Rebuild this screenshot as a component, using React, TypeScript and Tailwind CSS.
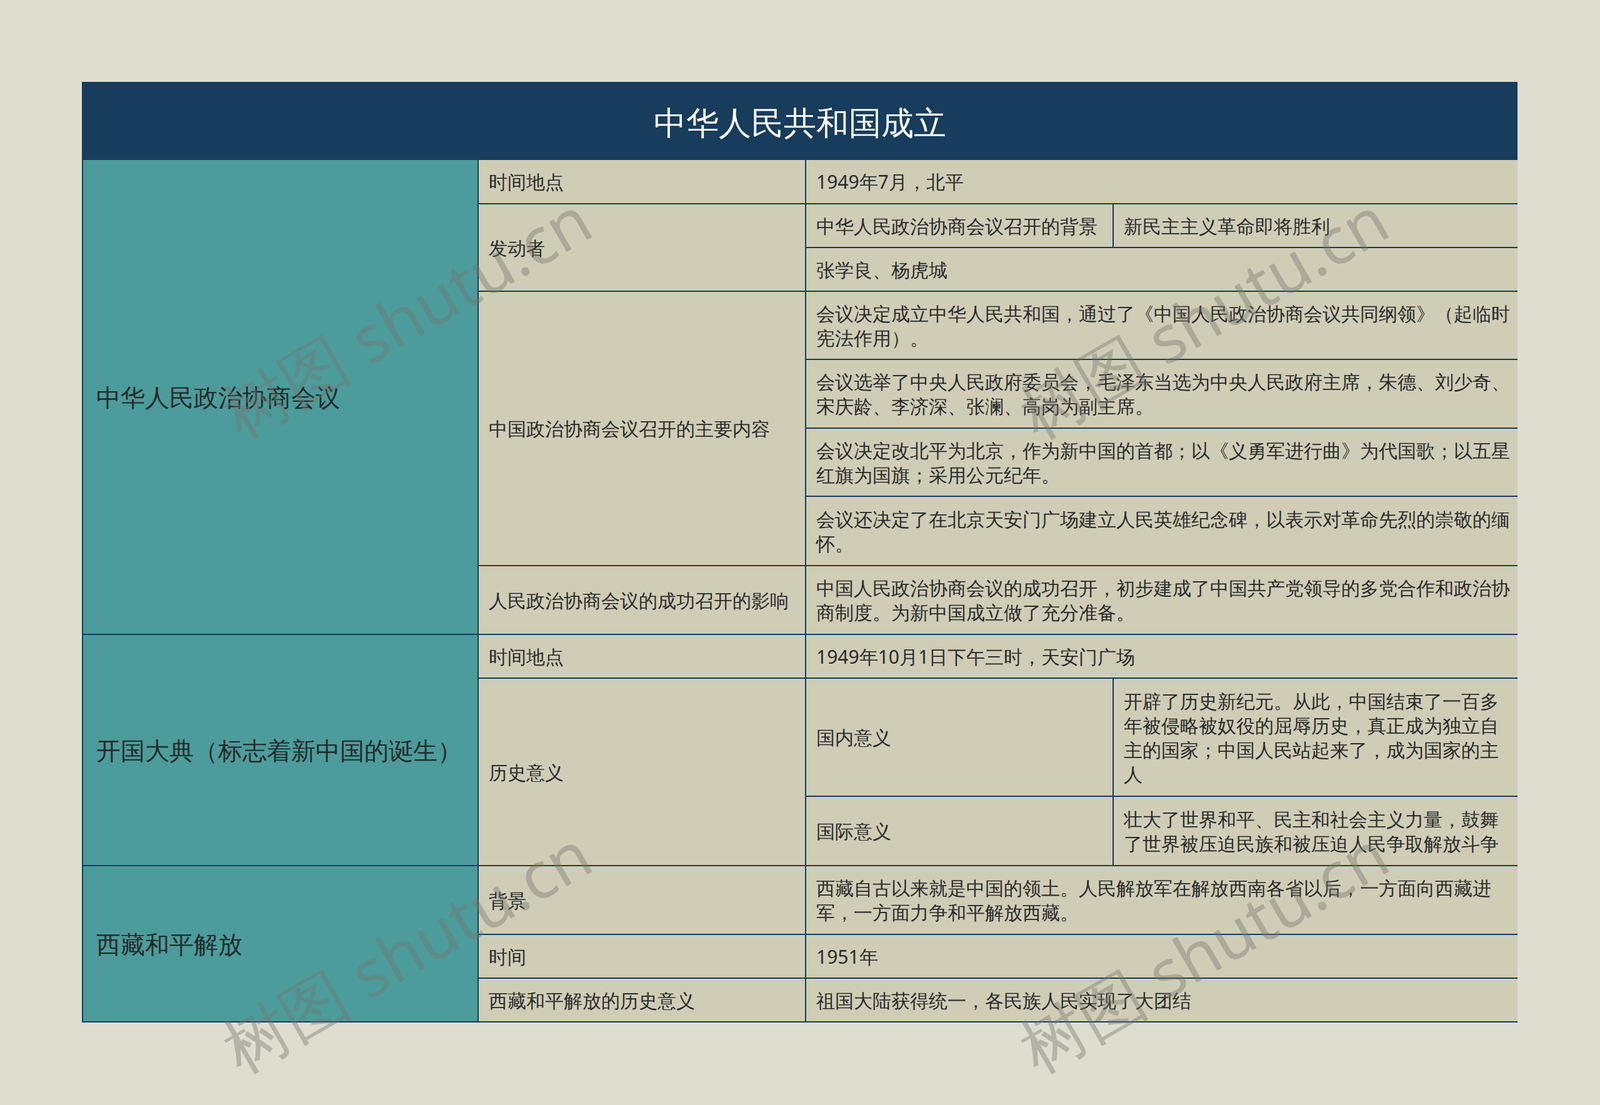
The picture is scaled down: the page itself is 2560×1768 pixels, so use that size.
import React from "react";

function C({ cls, children }: { cls: string; children: React.ReactNode }) {
  return (
    <div className={"bg-[#cfcdb6] flex items-center pl-[16px] pr-[8px] text-[30px] leading-[39px] text-[#2a2a2a] " + cls}>
      <div>{children}</div>
    </div>
  );
}
function T({ cls, children }: { cls: string; children: React.ReactNode }) {
  return <div className={"bg-[#4c9c9c] flex items-center pl-[21px] text-[39px] text-[#1f2a2a] " + cls}>{children}</div>;
}
function W({ cls }: { cls: string }) {
  return (
    <div className={"absolute whitespace-nowrap text-[104px] text-[#76766e] opacity-40 pointer-events-none -translate-x-1/2 -translate-y-1/2 -rotate-30 font-['Liberation_Serif','Noto_Sans_CJK_SC',serif] " + cls}>
      树图 shutu.cn
    </div>
  );
}

export default function App() {
  return (
    <div className="w-[2560px] h-[1768px] bg-[#dfddd0] relative overflow-hidden pt-[131px] pl-[131px] font-['Noto_Sans_CJK_SC','Open_Sans',sans-serif]">
      <div className="w-[2297px] bg-[#173c5c] border-2 border-[#173c5c]">
        <div className="h-[123px] flex items-center justify-center text-white text-[52px]">中华人民共和国成立</div>
        <div className="grid gap-[2px] bg-[#173c5c] grid-cols-[631px_522px_490px_646px] grid-rows-[69px_68px_68px_107px_108px_107px_109px_108px_68px_187px_109px_108px_68px_68px]">
          <T cls="col-start-1 col-end-2 row-start-1 row-end-9">中华人民政治协商会议</T>
          <T cls="col-start-1 col-end-2 row-start-9 row-end-12">开国大典（标志着新中国的诞生）</T>
          <T cls="col-start-1 col-end-2 row-start-12 row-end-15">西藏和平解放</T>

          <C cls="col-start-2 col-end-3 row-start-1 row-end-2">时间地点</C>
          <C cls="col-start-2 col-end-3 row-start-2 row-end-4">发动者</C>
          <C cls="col-start-2 col-end-3 row-start-4 row-end-8">中国政治协商会议召开的主要内容</C>
          <C cls="col-start-2 col-end-3 row-start-8 row-end-9">人民政治协商会议的成功召开的影响</C>
          <C cls="col-start-2 col-end-3 row-start-9 row-end-10">时间地点</C>
          <C cls="col-start-2 col-end-3 row-start-10 row-end-12">历史意义</C>
          <C cls="col-start-2 col-end-3 row-start-12 row-end-13">背景</C>
          <C cls="col-start-2 col-end-3 row-start-13 row-end-14">时间</C>
          <C cls="col-start-2 col-end-3 row-start-14 row-end-15">西藏和平解放的历史意义</C>

          <C cls="col-start-3 col-end-5 row-start-1 row-end-2">1949年7月，北平</C>
          <C cls="col-start-3 col-end-4 row-start-2 row-end-3">中华人民政治协商会议召开的背景</C>
          <C cls="col-start-4 col-end-5 row-start-2 row-end-3">新民主主义革命即将胜利</C>
          <C cls="col-start-3 col-end-5 row-start-3 row-end-4">张学良、杨虎城</C>
          <C cls="col-start-3 col-end-5 row-start-4 row-end-5">会议决定成立中华人民共和国，通过了《中国人民政治协商会议共同纲领》（起临时宪法作用）。</C>
          <C cls="col-start-3 col-end-5 row-start-5 row-end-6">会议选举了中央人民政府委员会，毛泽东当选为中央人民政府主席，朱德、刘少奇、宋庆龄、李济深、张澜、高岗为副主席。</C>
          <C cls="col-start-3 col-end-5 row-start-6 row-end-7">会议决定改北平为北京，作为新中国的首都；以《义勇军进行曲》为代国歌；以五星红旗为国旗；采用公元纪年。</C>
          <C cls="col-start-3 col-end-5 row-start-7 row-end-8">会议还决定了在北京天安门广场建立人民英雄纪念碑，以表示对革命先烈的崇敬的缅怀。</C>
          <C cls="col-start-3 col-end-5 row-start-8 row-end-9">中国人民政治协商会议的成功召开，初步建成了中国共产党领导的多党合作和政治协商制度。为新中国成立做了充分准备。</C>
          <C cls="col-start-3 col-end-5 row-start-9 row-end-10">1949年10月1日下午三时，天安门广场</C>
          <C cls="col-start-3 col-end-4 row-start-10 row-end-11">国内意义</C>
          <C cls="col-start-4 col-end-5 row-start-10 row-end-11">开辟了历史新纪元。从此，中国结束了一百多年被侵略被奴役的屈辱历史，真正成为独立自主的国家；中国人民站起来了，成为国家的主人</C>
          <C cls="col-start-3 col-end-4 row-start-11 row-end-12">国际意义</C>
          <C cls="col-start-4 col-end-5 row-start-11 row-end-12">壮大了世界和平、民主和社会主义力量，鼓舞了世界被压迫民族和被压迫人民争取解放斗争</C>
          <C cls="col-start-3 col-end-5 row-start-12 row-end-13">西藏自古以来就是中国的领土。人民解放军在解放西南各省以后，一方面向西藏进军，一方面力争和平解放西藏。</C>
          <C cls="col-start-3 col-end-5 row-start-13 row-end-14">1951年</C>
          <C cls="col-start-3 col-end-5 row-start-14 row-end-15">祖国大陆获得统一，各民族人民实现了大团结</C>
        </div>
      </div>
      <W cls="left-[650px] top-[505px]" />
      <W cls="left-[1925px] top-[505px]" />
      <W cls="left-[650px] top-[1520px]" />
      <W cls="left-[1925px] top-[1520px]" />
    </div>
  );
}
